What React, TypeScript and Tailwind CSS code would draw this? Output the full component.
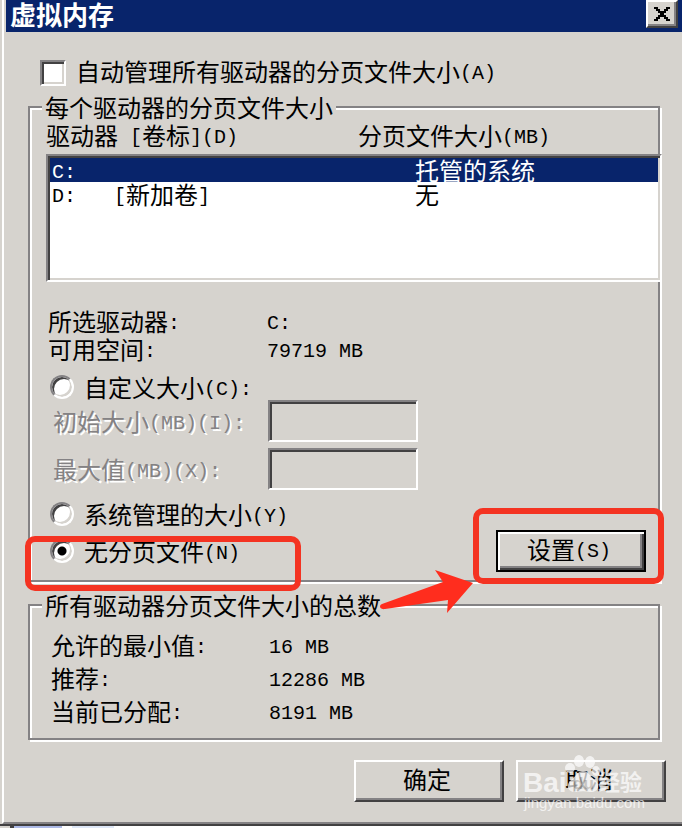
import type { ReactNode } from "react"

const drives = [
    { letter: "C:", label: "", size: "托管的系统", selected: true },
    { letter: "D:", label: "新加卷", size: "无", selected: false }
]

const totals = [
    { name: "允许的最小值", value: "16 MB" },
    { name: "推荐", value: "12286 MB" },
    { name: "当前已分配", value: "8191 MB" }
]

const raised = "border-2 border-t-white border-l-white border-r-[#424142] border-b-[#424142] bg-[#d6d3ce] shadow-[inset_-2px_-2px_0_#848284]"
const sunken = "border-2 border-t-[#848284] border-l-[#848284] border-r-white border-b-white shadow-[inset_2px_2px_0_#424142]"

// half-width characters, two of them fill one Chinese character
function Half({ children }: { children: ReactNode }) {
    return <span className="whitespace-pre align-[2px] font-['Liberation_Mono',monospace] text-xl leading-[0]">{children}</span>
}

function Group({ title, className, children }: { title: string, className: string, children: ReactNode }) {
    return (
        <fieldset className={`ml-[22px] mr-[22px] min-w-0 border-2 border-[#848284] pl-3 shadow-[2px_2px_0_#fff,inset_2px_2px_0_#fff] ${className}`}>
            <legend className="bg-[#d6d3ce] px-[3px] leading-[22px]">{title}</legend>
            {children}
        </fieldset>
    )
}

function Radio({ id, checked, children }: { id: string, checked?: boolean, children: ReactNode }) {
    return (
        <div className="flex h-[26px] items-center gap-[10px] pl-2">
            <input
                type="radio"
                name="paging"
                id={id}
                defaultChecked={checked}
                className="size-6 appearance-none rounded-full border-2 border-t-[#848284] border-l-[#848284] border-r-white border-b-white bg-white shadow-[inset_2px_2px_0_#424142,inset_-2px_-2px_0_#d6d3ce] checked:bg-[radial-gradient(circle,#000_4px,#fff_5px)]"
            />
            <label htmlFor={id}>{children}</label>
        </div>
    )
}

function SizeField({ id, name, hint }: { id: string, name: string, hint: string }) {
    return (
        <div className="flex h-[42px] items-center pl-[11px]">
            <label htmlFor={id} className="w-[215px] text-[#848284] [text-shadow:2px_2px_0_#fff]">
                {name}<Half>{hint}</Half>
            </label>
            <input id={id} disabled className={`h-full w-[150px] bg-[#d6d3ce] px-2 ${sunken}`} />
        </div>
    )
}

function Watermark() {
    return (
        <div className="pointer-events-none absolute -top-[6px] left-[6px] font-['Liberation_Sans','Noto_Sans_CJK_SC',sans-serif] text-white opacity-70">
            <svg width="130" height="58" viewBox="0 0 130 58" fill="currentColor">
                <ellipse cx="57" cy="7" rx="5" ry="6" />
                <ellipse cx="68" cy="8" rx="5" ry="6" />
                <ellipse cx="48" cy="14" rx="5" ry="5" />
                <ellipse cx="74" cy="17" rx="4" ry="5" />
                <path d="M61 17c-5 0-7 5-12 9-6 5-3 13 5 12 5-1 9-1 14 0 8 1 11-7 5-12-5-4-7-9-12-9z" />
                <text x="1" y="38" fontSize="28" fontWeight="bold">Bai</text>
                <text x="51" y="35" fontSize="17" fontWeight="bold" fill="#c4c1bd">du</text>
                <text x="76" y="36" fontSize="22" fontWeight="bold">经验</text>
                <text x="2" y="54" fontSize="15">jingyan.baidu.com</text>
            </svg>
        </div>
    )
}

export default function App() {
    return (
        <div className="bg-white font-['Noto_Sans_CJK_SC',sans-serif] text-2xl leading-7 text-black">
            <main className="border-b-2 border-[#424142] bg-[#d6d3ce] pl-0.5">
                <div className="border-b-2 border-l-2 border-b-[#848284] border-l-white pb-5 pl-0.5">
                    <header className="flex h-8 items-start justify-between bg-[#08246b] pl-1 pr-1 text-white">
                        <h1 className="text-[26px] font-bold leading-7">虚拟内存</h1>
                        <button aria-label="关闭" className={`flex h-7 w-8 items-center justify-center text-black ${raised}`}>
                            <svg width="16" height="14" viewBox="0 0 8 7" shapeRendering="crispEdges">
                                <path d="M0 0h2v1h1v1h2V1h1V0h2v1H7v1H6v1H5v1h1v1h1v1h1v1H6V6H5V5H3v1H2v1H0V6h1V5h1V4h1V3H2V2H1V1H0z" />
                            </svg>
                        </button>
                    </header>

                    <div className="flex items-center gap-[10px] pb-[10px] pl-[34px] pt-7">
                        <input
                            type="checkbox"
                            id="auto"
                            className="size-[26px] appearance-none border-2 border-t-[#848284] border-l-[#848284] border-r-white border-b-white bg-white shadow-[inset_2px_2px_0_#424142,inset_-2px_-2px_0_#d6d3ce]"
                        />
                        <label htmlFor="auto" className="pb-1 leading-[22px]">自动管理所有驱动器的分页文件大小<Half>(A)</Half></label>
                    </div>

                    <Group title="每个驱动器的分页文件大小" className="pb-2 pt-[3px]">
                        <div className="mb-[5px] flex pl-1">
                            <span className="w-[312px]">驱动器<Half>{" ["}</Half>卷标<Half>](D)</Half></span>
                            <span>分页文件大小<Half>(MB)</Half></span>
                        </div>
                        <div className="-mr-1 ml-1 h-32 border-2 border-t-[#848284] border-l-[#848284] border-r-white border-b-white bg-white p-0.5 shadow-[inset_2px_2px_0_#424142,inset_-2px_-2px_0_#d6d3ce]">
                            <table aria-label="驱动器" className="w-full table-fixed leading-6">
                                <tbody>
                                    {drives.map((drive) => (
                                        <tr key={drive.letter} className={drive.selected ? "h-6 bg-[#08246b] text-white" : "h-6"}>
                                            <td className="w-16 p-0 pl-0.5"><Half>{drive.letter}</Half></td>
                                            <td className="w-[301px] p-0">
                                                {drive.label && <><Half>[</Half>{drive.label}<Half>]</Half></>}
                                            </td>
                                            <td className="p-0">{drive.size}</td>
                                        </tr>
                                    ))}
                                </tbody>
                            </table>
                        </div>

                        <dl className="mb-[11px] mt-[25px] grid grid-cols-[219px_1fr] pl-[6px]">
                            <dt>所选驱动器<Half>:</Half></dt>
                            <dd><Half>C:</Half></dd>
                            <dt>可用空间<Half>:</Half></dt>
                            <dd><Half>79719 MB</Half></dd>
                        </dl>

                        <Radio id="custom">自定义大小<Half>(C):</Half></Radio>
                        <div className="mb-[11px] flex flex-col gap-[6px]">
                            <SizeField id="initial" name="初始大小" hint="(MB)(I):" />
                            <SizeField id="maximum" name="最大值" hint="(MB)(X):" />
                        </div>
                        <Radio id="system">系统管理的大小<Half>(Y)</Half></Radio>
                        <div className="mt-[3px] flex items-center justify-between pr-3">
                            <div className="relative">
                                <Radio id="none" checked>无分页文件<Half>(N)</Half></Radio>
                                <div className="pointer-events-none absolute -left-[17px] -top-[2px] h-[55px] w-[276px] rounded-[10px] border-[6px] border-[#f43322]" />
                            </div>
                            <div className="relative">
                                <button className="block h-[42px] w-[150px] border-2 border-black bg-[#d6d3ce] pb-1 pr-1 shadow-[inset_2px_2px_0_#fff,inset_-2px_-2px_0_#424142,inset_-4px_-4px_0_#848284]">
                                    设置<Half>(S)</Half>
                                </button>
                                <div className="pointer-events-none absolute -left-[23px] -top-[22px] h-[76px] w-[191px] rounded-[10px] border-[6px] border-[#f43322]" />
                                <svg className="pointer-events-none absolute -left-[116px] top-[39px]" width="94" height="46" viewBox="0 0 94 46">
                                    <path d="M2 35L63 13L55 1L93 14L67 44L68 31L5 40C-1 41-1 36 2 35z" fill="#ff2d1e" />
                                </svg>
                            </div>
                        </div>
                    </Group>

                    <Group title="所有驱动器分页文件大小的总数" className="mt-3 pb-[11px] pt-3">
                        <dl className="grid grid-cols-[218px_1fr] pl-[9px] leading-[33px]">
                            {totals.map((item) => (
                                <div key={item.name} className="contents">
                                    <dt>{item.name}<Half>:</Half></dt>
                                    <dd><Half>{item.value}</Half></dd>
                                </div>
                            ))}
                        </dl>
                    </Group>

                    <div className="mt-5 flex justify-end gap-3 pr-4">
                        <button className={`h-[42px] w-[150px] pb-1 pr-1 ${raised}`}>确定</button>
                        <div className="relative">
                            <button className={`block h-[42px] w-[150px] pb-1 pr-1 ${raised}`}>取消</button>
                            <Watermark />
                        </div>
                    </div>
                </div>
            </main>
            <div className="flex h-0.5">
                <span className="w-[10px] bg-[#d6d3ce]" />
                <span className="w-1 bg-[#424142]" />
                <span className="mr-[10px] w-12 bg-[#adbae7]" />
                <span className="w-[42px] bg-[#dee7f7]" />
            </div>
        </div>
    )
}
